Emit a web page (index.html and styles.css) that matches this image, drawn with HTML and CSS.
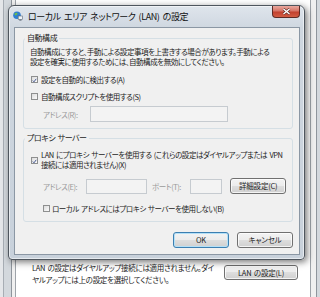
FILE: index.html
```html
<!DOCTYPE html>
<html lang="ja">
<head>
    <meta charset="UTF-8">
    <meta name="viewport" content="width=device-width, initial-scale=1.0">
    <title>ローカル エリア ネットワーク (LAN) の設定</title>
    <link rel="stylesheet" href="styles.css">
</head>
<body>

    <!-- 後ろのインターネット オプション (接続タブ) -->
    <div class="parent">
        <div class="parent-frame">
            <div class="parent-client">
                <div class="tab-page">
                    <div class="lan-row">
                        <p class="lan-note">LAN の設定はダイヤルアップ接続には適用されません。ダイ<br>ヤルアップには上の設定を選択してください。</p>
                        <button type="button" class="btn lan-btn">LAN の設定(L)</button>
                    </div>
                </div>
            </div>
        </div>
    </div>

    <!-- LAN の設定ダイアログ -->
    <div class="dialog">
        <div class="titlebar">
            <svg class="title-icon" width="10" height="10" viewBox="0 0 10 10">
                <circle cx="4" cy="4.3" r="3.8" fill="#2f7fd0"/>
                <path d="M1.6 2.4 Q3.2 1.1 4.6 2.2 Q4.2 3.9 2.6 4.6 Q1.2 3.8 1.6 2.4Z" fill="#6cbc4c"/>
                <path d="M4.8 6.6 Q5.6 5.8 6.6 6.2 Q6.2 7.4 5.2 7.8Z" fill="#6cbc4c"/>
                <rect x="5.2" y="5" width="4.4" height="3.4" fill="#eef3f8" stroke="#5d6875" stroke-width="0.6"/>
                <rect x="6.3" y="8.6" width="2.2" height="1" fill="#5d6875"/>
            </svg>
            <span class="title">ローカル エリア ネットワーク (LAN) の設定</span>
            <div class="close-btn">
                <svg width="9" height="7" viewBox="0 0 9 7">
                    <path d="M1.5 1 L7.5 6 M7.5 1 L1.5 6" stroke="#5a2620" stroke-width="2.6"/>
                    <path d="M1.5 1 L7.5 6 M7.5 1 L1.5 6" stroke="#ffffff" stroke-width="1.5"/>
                </svg>
            </div>
        </div>

        <div class="client">
            <fieldset class="group group-auto">
                <legend>自動構成</legend>
                <p class="desc">自動構成にすると、手動による設定事項を上書きする場合があります。手動による<br>設定を確実に使用するためには、自動構成を無効にしてください。</p>
                <label class="check check-first"><span class="box"><svg width="7" height="7" viewBox="0 0 7 7"><path d="M1.1 3.6 L2.8 5.3 L5.9 1.2" stroke="#3b4f8c" stroke-width="1.3" fill="none"/></svg></span>設定を自動的に検出する(A)</label>
                <label class="check check-second"><span class="box"></span>自動構成スクリプトを使用する(S)</label>
                <div class="field-row row-script">
                    <span class="dim lbl-r">アドレス(R):</span>
                    <span class="textbox tb-script"></span>
                </div>
            </fieldset>

            <fieldset class="group group-proxy">
                <legend>プロキシ サーバー</legend>
                <label class="check check-proxy"><span class="box"><svg width="7" height="7" viewBox="0 0 7 7"><path d="M1.1 3.6 L2.8 5.3 L5.9 1.2" stroke="#3b4f8c" stroke-width="1.3" fill="none"/></svg></span><span>LAN にプロキシ サーバーを使用する (これらの設定はダイヤルアップまたは VPN<br>接続には適用されません)(X)</span></label>
                <div class="field-row row-proxy">
                    <span class="dim lbl-e">アドレス(E):</span>
                    <span class="textbox tb-addr"></span>
                    <span class="dim lbl-port">ポート(T):</span>
                    <span class="textbox tb-port"></span>
                    <button type="button" class="btn adv-btn">詳細設定(C)</button>
                </div>
                <label class="check check-bypass"><span class="box"></span>ローカル アドレスにはプロキシ サーバーを使用しない(B)</label>
            </fieldset>

            <div class="buttons">
                <button type="button" class="btn btn-default">OK</button>
                <button type="button" class="btn">キャンセル</button>
            </div>
        </div>
    </div>

</body>
</html>
```

FILE: styles.css
```css
body {
    margin: 0;
    width: 320px;
    height: 297px;
    overflow: hidden;
    position: relative;
    background-color: #d6dade;
    font-family: "Noto Sans CJK JP", "Noto Sans", sans-serif;
    font-feature-settings: "palt";
    font-size: 7.5px;
    color: #1c1c1c;
}

/* 後ろのウィンドウ */
.parent {
    height: 297px;
    display: flex;
    border-left: 3px solid #e4e6e9;
}

.parent-frame {
    flex: 1;
    display: flex;
    border-left: 1px solid #a7adb4;
    padding: 0 3px 0 7px;
    background-color: #d3d8dd;
}

.parent-client {
    flex: 1;
    display: flex;
    border-left: 1px solid #8f959c;
    border-right: 1px solid #8f959c;
    padding: 0 5px 0 3px;
    background-color: #f0f0f0;
}

.tab-page {
    flex: 1;
    display: flex;
    flex-direction: column;
    justify-content: flex-end;
    background-color: #ffffff;
    border-left: 1px solid #9ea3a9;
    border-right: 1px solid #9ea3a9;
    padding: 0 12px 11px 16px;
}

.lan-row {
    display: flex;
    align-items: flex-start;
}

.lan-note {
    margin: 0;
    line-height: 12px;
    letter-spacing: -0.3px;
    word-spacing: 1px;
    white-space: nowrap;
}

.lan-btn {
    margin-left: auto;
    margin-top: 3px;
    width: 74px;
    height: 15px;
}

/* ダイアログ */
.dialog {
    position: absolute;
    left: 8px;
    top: 5px;
    width: 297px;
    height: 255px;
    box-sizing: border-box;
    border: 1px solid #4f565e;
    border-radius: 6px 6px 4px 4px;
    padding: 0 4px 4px 5px;
    background: linear-gradient(#dfe5ec, #cfd7e0 22px, #c8d1db);
    box-shadow: 2px 2px 7px rgba(0, 0, 0, 0.55), inset 0 0 0 1px rgba(255, 255, 255, 0.55);
}

.titlebar {
    height: 21px;
    display: flex;
    align-items: center;
    margin: 0 -4px 0 -5px;
}

.title-icon {
    margin: 0 5px 1px 4px;
    flex: none;
}

.title {
    font-size: 9px;
    letter-spacing: -0.4px;
    word-spacing: 1.5px;
    color: #101010;
    margin-bottom: 1px;
    white-space: nowrap;
}

.close-btn {
    margin-left: auto;
    margin-right: 4px;
    align-self: flex-start;
    width: 28px;
    height: 12px;
    box-sizing: border-box;
    border: 1px solid #5e2a24;
    border-top: none;
    border-radius: 0 0 4px 4px;
    background: linear-gradient(#eaa99f 0%, #d67466 45%, #c2412f 55%, #d35c43 100%);
    display: flex;
    align-items: center;
    justify-content: center;
}

.client {
    height: 228px;
    box-sizing: border-box;
    border: 1px solid #8b97a4;
    background-color: #f0f0f0;
    padding: 0 6px 0 8px;
    letter-spacing: -0.45px;
    word-spacing: 1px;
}

.group {
    border: 1px solid #d5dfe5;
    border-radius: 3px;
    margin: 0;
    min-width: 0;
    padding: 0 6px 0 6px;
}

.group legend {
    font-size: 8px;
    line-height: 10px;
    padding: 0 2px;
    margin-left: -5px;
    color: #1c1c1c;
}

.group-auto {
    margin-top: 5px;
    padding-top: 4px;
    padding-bottom: 6px;
}

.group-proxy {
    margin-top: 4px;
    padding-top: 7px;
    padding-bottom: 7px;
}

.desc {
    margin: 0;
    line-height: 9.5px;
    white-space: nowrap;
}

.check {
    display: flex;
    align-items: center;
    height: 11px;
    white-space: nowrap;
    margin-left: 1px;
}

.box {
    width: 7px;
    height: 7px;
    box-sizing: border-box;
    border: 1px solid #8e8f8f;
    background: linear-gradient(135deg, #dcdcdc, #fbfbfb);
    margin-right: 3px;
    flex: none;
    display: flex;
}

.check-first {
    margin-top: 8px;
}

.check-second {
    margin-top: 6px;
}

.check-proxy {
    height: auto;
    line-height: 10px;
}

.check-bypass {
    margin-top: 9px;
    margin-left: 13px;
}

.check-bypass .box {
    margin-right: 2px;
}

.field-row {
    display: flex;
    align-items: center;
    height: 16px;
    white-space: nowrap;
}

.row-script {
    margin-top: 4px;
}

.row-proxy {
    margin-top: 8px;
}

.dim {
    color: #9a9a9a;
}

.lbl-r {
    margin-left: 13px;
    width: 47px;
}

.lbl-e {
    margin-left: 13px;
    width: 43px;
}

.lbl-port {
    margin-left: 5px;
    width: 38px;
}

.textbox {
    height: 15px;
    box-sizing: border-box;
    border: 1px solid #c6cbd0;
    background-color: #f3f3f3;
}

.tb-script {
    width: 138px;
    height: 16px;
}

.tb-addr {
    width: 62px;
}

.tb-port {
    width: 33px;
}

.adv-btn {
    margin-left: 8px;
    width: 56px;
    height: 16px;
}

.buttons {
    display: flex;
    justify-content: flex-end;
    gap: 8px;
    margin-top: 10px;
}

.buttons .btn {
    width: 56px;
    height: 16px;
}

.btn {
    font-family: inherit;
    font-feature-settings: "palt";
    font-size: 7.5px;
    letter-spacing: -0.2px;
    word-spacing: 1px;
    color: #1c1c1c;
    padding: 0;
    border: 1px solid #707070;
    border-radius: 3px;
    background: linear-gradient(#f3f3f3 0%, #ececec 50%, #dedede 50%, #d0d0d0 100%);
    box-shadow: inset 0 0 0 1px rgba(255, 255, 255, 0.75);
    line-height: 1;
}

.btn-default {
    border-color: #3c7fb1;
    box-shadow: inset 0 0 0 1px #b4e0f7;
}
```
